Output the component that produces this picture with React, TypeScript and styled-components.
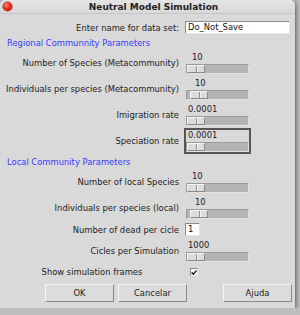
import React from "react";
import styled, { createGlobalStyle } from "styled-components";

const GlobalStyle = createGlobalStyle`
  html, body {
    margin: 0;
    padding: 0;
    background: #bdbdbd;
  }
  body {
    font-family: "DejaVu Sans", "Liberation Sans", sans-serif;
    font-size: 8.4px;
    color: #1c1c1c;
  }
`;

interface ScaleProps {
  value: string;
  valueOffset: number; // where Tk clamps the value label
  thumbOffset: number; // slider position inside the trough
  focused?: boolean;
}

function Scale({ value, valueOffset, thumbOffset, focused }: ScaleProps) {
  return (
    <S.ScaleBox $focused={!!focused}>
      <S.ScaleValue $offset={valueOffset}>{value}</S.ScaleValue>
      <S.Trough $offset={thumbOffset}>
        <S.Thumb />
      </S.Trough>
    </S.ScaleBox>
  );
}

function CheckMark() {
  return (
    <svg width="6" height="5" viewBox="0 0 6 5">
      <path d="M0.6 2.4 L2.3 4.1 L5.5 0.6" stroke="#111" strokeWidth="1.4" fill="none" />
    </svg>
  );
}

export default function App() {
  return (
    <>
      <GlobalStyle />
      <S.Window>
        <S.TitleBar>
          <S.CloseButton />
          <S.Title>Neutral Model Simulation</S.Title>
        </S.TitleBar>

        <S.Form>
          <S.Label>Enter name for data set:</S.Label>
          <S.Cell>
            <S.Entry $width={105}>Do_Not_Save</S.Entry>
          </S.Cell>

          <S.Section>Regional Communnity Parameters</S.Section>

          <S.Label>Number of Species (Metacommunity)</S.Label>
          <Scale value="10" valueOffset={6} thumbOffset={0} />

          <S.Label>Individuals per species (Metacommunity)</S.Label>
          <Scale value="10" valueOffset={9} thumbOffset={3} />

          <S.Label>Imigration rate</S.Label>
          <Scale value="0.0001" valueOffset={2} thumbOffset={0} />

          <S.Label>Speciation rate</S.Label>
          <Scale value="0.0001" valueOffset={2} thumbOffset={0} focused />

          <S.Section $top={1}>Local Community Parameters</S.Section>

          <S.Label>Number of local Species</S.Label>
          <Scale value="10" valueOffset={6} thumbOffset={0} />

          <S.Label>Individuals per species (local)</S.Label>
          <Scale value="10" valueOffset={9} thumbOffset={3} />

          <S.Label>Number of dead per cicle</S.Label>
          <S.Cell>
            <S.Entry $width={15}>1</S.Entry>
          </S.Cell>

          <S.Label>Cicles per Simulation</S.Label>
          <Scale value="1000" valueOffset={2} thumbOffset={0} />

          <S.CenterLabel>Show simulation frames</S.CenterLabel>
          <S.Cell>
            <S.CheckBox>
              <CheckMark />
            </S.CheckBox>
          </S.Cell>
        </S.Form>

        <S.ButtonRow>
          <S.Button>OK</S.Button>
          <S.Button>Cancelar</S.Button>
          <S.Button $gap={32}>Ajuda</S.Button>
        </S.ButtonRow>
      </S.Window>
    </>
  );
}

const S = {
  Window: styled.div`
    width: 295px;
    height: 308px;
    display: flex;
    flex-direction: column;
    background: #d9d9d9;
    border-radius: 5px 5px 0 0;
    box-shadow: 1px 1px 4px rgba(0, 0, 0, 0.55);
    overflow: hidden;
  `,
  TitleBar: styled.div`
    height: 14px;
    display: flex;
    align-items: center;
    background: linear-gradient(#e4e4e4, #d8d8d8);
    border-bottom: 1px solid #c6c6c6;
    box-sizing: border-box;
  `,
  CloseButton: styled.span`
    width: 9px;
    height: 9px;
    margin-left: 3px;
    border-radius: 50%;
    background: radial-gradient(circle at 40% 35%, #ff8a80 0%, #e8281c 45%, #a8120a 100%);
    box-shadow: 0 0 0 0.5px #8a1a10;
  `,
  Title: styled.div`
    flex: 1;
    text-align: center;
    font-weight: bold;
    font-size: 9px;
    color: #222;
  `,
  Form: styled.div`
    display: grid;
    grid-template-columns: 180px 1fr;
    column-gap: 4px;
    padding-top: 5px;
  `,
  Label: styled.div`
    text-align: right;
    align-self: center;
    white-space: nowrap;
    padding-right: 1px;
  `,
  CenterLabel: styled.div`
    text-align: center;
    align-self: center;
    white-space: nowrap;
    padding-left: 4px;
  `,
  Cell: styled.div`
    display: flex;
    align-items: center;
    min-height: 16px;
    padding: 2px 0;
    box-sizing: border-box;
  `,
  Entry: styled.div<{ $width: number }>`
    width: ${({ $width }) => $width}px;
    height: 13px;
    box-sizing: border-box;
    margin-left: 1px;
    padding-left: 2px;
    line-height: 11px;
    background: #ffffff;
    border: 1px solid #8c8c8c;
    border-right-color: #e6e6e6;
    border-bottom-color: #e6e6e6;
    color: #111;
  `,
  Section: styled.div<{ $top?: number }>`
    grid-column: 1 / -1;
    height: 14px;
    line-height: 14px;
    margin-top: ${({ $top }) => $top || 0}px;
    padding-left: 7px;
    color: #3a3aff;
  `,
  ScaleBox: styled.div<{ $focused: boolean }>`
    width: 67px;
    height: 26px;
    box-sizing: border-box;
    border: 2px solid ${({ $focused }) => ($focused ? "#555555" : "transparent")};
    display: flex;
    flex-direction: column;
  `,
  ScaleValue: styled.div<{ $offset: number }>`
    height: 11px;
    line-height: 11px;
    padding-left: ${({ $offset }) => $offset}px;
    color: #1c1c1c;
  `,
  Trough: styled.div<{ $offset: number }>`
    width: 63px;
    height: 10px;
    margin-top: 1px;
    box-sizing: border-box;
    display: flex;
    align-items: center;
    padding-left: ${({ $offset }) => $offset}px;
    background: #b4b4b4;
    border: 1px solid #9a9a9a;
    border-right-color: #e2e2e2;
    border-bottom-color: #e2e2e2;
  `,
  Thumb: styled.div`
    width: 18px;
    height: 8px;
    box-sizing: border-box;
    background: linear-gradient(
      to right,
      #dcdcdc 0,
      #dcdcdc 8px,
      #8e8e8e 8px,
      #8e8e8e 9px,
      #f2f2f2 9px,
      #f2f2f2 10px,
      #dcdcdc 10px
    );
    border: 1px solid #f4f4f4;
    border-right-color: #8a8a8a;
    border-bottom-color: #8a8a8a;
  `,
  CheckBox: styled.div`
    width: 8px;
    height: 8px;
    margin-left: 6px;
    box-sizing: border-box;
    display: flex;
    align-items: center;
    justify-content: center;
    background: #f4f4f4;
    border: 1px solid #8c8c8c;
    border-right-color: #e8e8e8;
    border-bottom-color: #e8e8e8;
  `,
  ButtonRow: styled.div`
    display: flex;
    padding: 4px 0 0 45px;
    gap: 4px;
  `,
  Button: styled.div<{ $gap?: number }>`
    width: 69px;
    height: 18px;
    box-sizing: border-box;
    margin-left: ${({ $gap }) => $gap || 0}px;
    display: flex;
    align-items: center;
    justify-content: center;
    background: #dcdcdc;
    border: 1px solid #f6f6f6;
    border-right-color: #8a8a8a;
    border-bottom-color: #8a8a8a;
    color: #1c1c1c;
  `,
};
